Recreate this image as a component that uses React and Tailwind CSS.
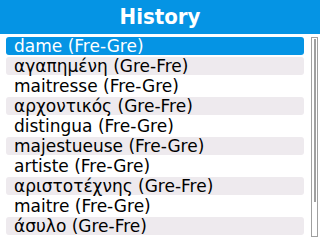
import React from "react";

const items = [
  "dame (Fre-Gre)",
  "αγαπημένη (Gre-Fre)",
  "maitresse (Fre-Gre)",
  "αρχοντικός (Gre-Fre)",
  "distingua (Fre-Gre)",
  "majestueuse (Fre-Gre)",
  "artiste (Fre-Gre)",
  "αριστοτέχνης (Gre-Fre)",
  "maitre (Fre-Gre)",
  "άσυλο (Gre-Fre)",
];

export default function App() {
  return (
    <div
      className="w-[320px] h-[240px] bg-white overflow-hidden"
      style={{ fontFamily: '"DejaVu Sans", sans-serif' }}
    >
      <div className="h-[34px] bg-[#0594e4] flex items-center justify-center">
        <span
          className="text-white font-bold text-[22px] leading-none [font-stretch:condensed]"
          style={{ fontFamily: '"DejaVu Sans Condensed", "DejaVu Sans", sans-serif' }}
        >
          History
        </span>
      </div>
      <div className="flex pt-[3px]">
        <div className="flex flex-col gap-[2px] pl-[6px] w-[304px]">
          {items.map((t, i) => (
            <div
              key={i}
              className={
                "h-[18px] rounded-[3px] flex items-center pl-[8px] text-[17px] leading-none " +
                (i === 0
                  ? "bg-[#0594e4] text-white"
                  : i % 2 === 1
                  ? "bg-[#eeeaee] text-black"
                  : "text-black")
              }
            >
              {t}
            </div>
          ))}
        </div>
        <div className="ml-[7px] w-[7px] h-[200px] border border-[#a0a0a0] flex justify-end pr-[1px] pt-[1px]">
          <div className="w-[2px] h-[163px] bg-[#a0a0a0]" />
        </div>
      </div>
    </div>
  );
}
